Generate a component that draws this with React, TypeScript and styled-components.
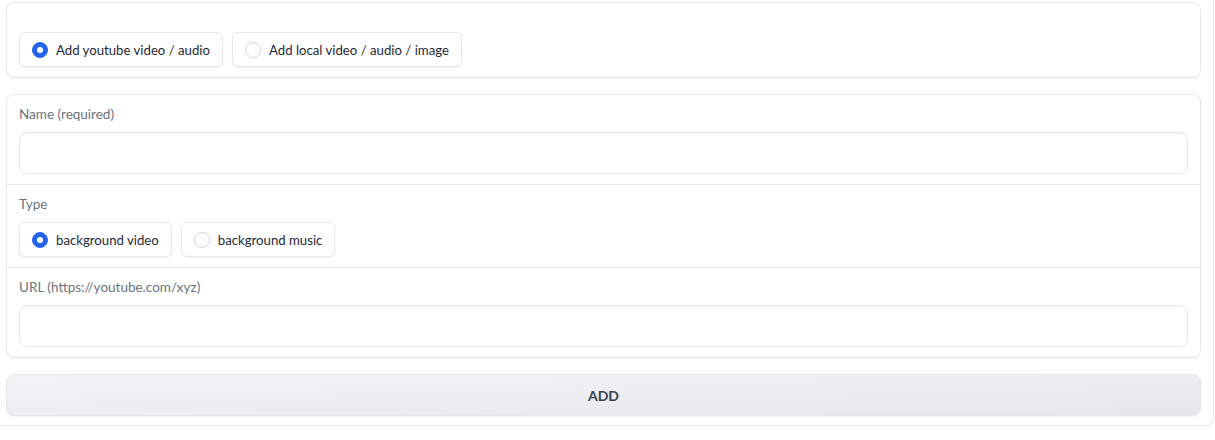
import React from "react";
import styled, { createGlobalStyle } from "styled-components";

const Global = createGlobalStyle`
  html, body { margin: 0; padding: 0; background: #ffffff; }
  body { font-family: "Lato", "Noto Sans", sans-serif; overflow: hidden; }
  * { box-sizing: border-box; }
`;

const Outer = styled.div`
  margin: -11px 0 0 -7px;
  width: 1221px;
  padding: 12px 12px 9px 12px;
  border: 1px solid #e5e7eb;
  border-radius: 8px;
  background: #ffffff;
  display: flex;
  flex-direction: column;
  gap: 16px;
`;

const Block = styled.div`
  border: 1px solid #e5e7eb;
  border-radius: 8px;
  background: #ffffff;
  box-shadow: 0 1px 2px rgba(0, 0, 0, 0.03);
  display: flex;
  flex-direction: column;
`;

const Field = styled.div<{ $divider?: boolean }>`
  padding: 10px 12px;
  display: flex;
  flex-direction: column;
  gap: 8px;
  border-top: ${(p) => (p.$divider ? "1px solid #e5e7eb" : "none")};
`;

const Label = styled.span<{ $empty?: boolean }>`
  font-size: 13.5px;
  line-height: 19px;
  height: ${(p) => (p.$empty ? "11px" : "19px")};
  color: #6b7280;
`;

const Input = styled.input`
  height: 42px;
  width: 100%;
  border: 1px solid #e5e7eb;
  border-radius: 8px;
  background: #ffffff;
  box-shadow: inset 0 1px 2px rgba(0, 0, 0, 0.03);
  outline: none;
  font: inherit;
  padding: 0 12px;
`;

const RadioRow = styled.div`
  display: flex;
  gap: 9px;
`;

const RadioItem = styled.label`
  display: flex;
  align-items: center;
  gap: 8px;
  height: 35px;
  padding: 0 12px;
  border: 1px solid #e5e7eb;
  border-radius: 6px;
  background: #ffffff;
  box-shadow: 0 1px 2px rgba(0, 0, 0, 0.05);
  font-size: 13.2px;
  color: #1f2937;
`;

const Dot = styled.span<{ $on?: boolean }>`
  width: 16px;
  height: 16px;
  border-radius: 50%;
  flex: none;
  background: ${(p) => (p.$on ? "#2563eb" : "#ffffff")};
  border: 1px solid ${(p) => (p.$on ? "#2563eb" : "#d1d5db")};
  display: flex;
  align-items: center;
  justify-content: center;
  &::after {
    content: "";
    width: 6px;
    height: 6px;
    border-radius: 50%;
    background: #ffffff;
    display: ${(p) => (p.$on ? "block" : "none")};
  }
`;

const Button = styled.button`
  height: 42px;
  width: 100%;
  border: 1px solid #e5e7eb;
  border-radius: 8px;
  background: linear-gradient(to bottom right, #f3f4f6, #e5e7eb);
  box-shadow: 0 1px 2px rgba(0, 0, 0, 0.05);
  font-family: inherit;
  font-size: 14px;
  font-weight: 700;
  color: #374151;
`;

function Radio({ items, value }: { items: string[]; value: string }) {
  return (
    <RadioRow>
      {items.map((it) => (
        <RadioItem key={it}>
          <Dot $on={it === value} />
          {it}
        </RadioItem>
      ))}
    </RadioRow>
  );
}

export default function App() {
  return (
    <>
      <Global />
      <Outer>
        <Block>
          <Field>
            <Label $empty />
            <Radio
              items={["Add youtube video / audio", "Add local video / audio / image"]}
              value="Add youtube video / audio"
            />
          </Field>
        </Block>
        <Block>
          <Field>
            <Label>Name (required)</Label>
            <Input />
          </Field>
          <Field $divider>
            <Label>Type</Label>
            <Radio items={["background video", "background music"]} value="background video" />
          </Field>
          <Field $divider>
            <Label>URL (https://youtube.com/xyz)</Label>
            <Input />
          </Field>
        </Block>
        <Button>ADD</Button>
      </Outer>
    </>
  );
}
